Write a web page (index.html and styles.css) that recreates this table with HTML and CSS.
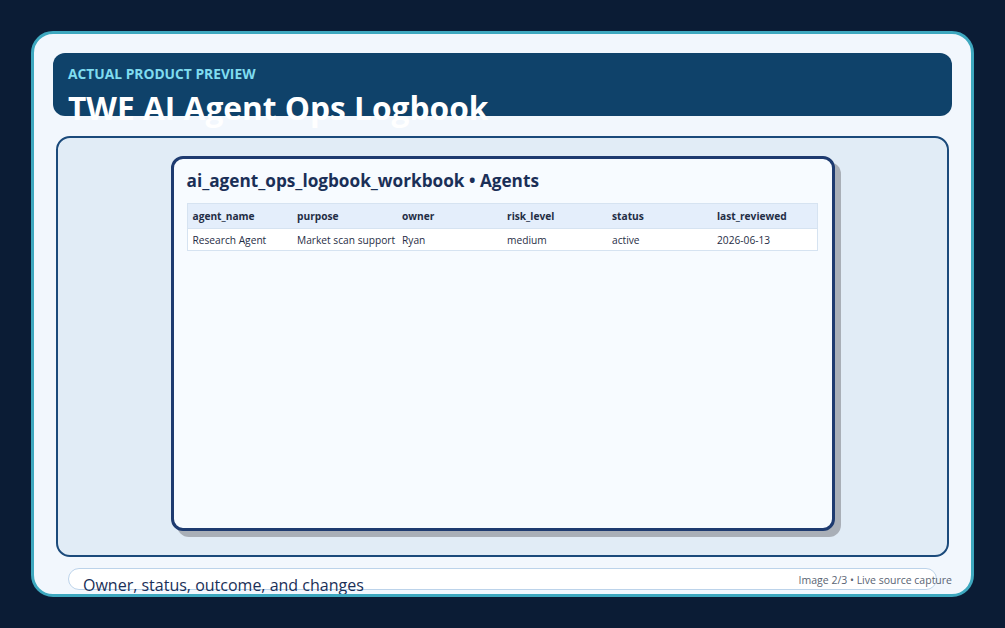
FILE: index.html
```html
<!DOCTYPE html>
<html>
<head>
<meta charset="utf-8">
<link rel="stylesheet" href="styles.css">
</head>
<body>
<div class="card">
  <header class="hero">
    <div class="eyebrow">ACTUAL PRODUCT PREVIEW</div>
    <h1 class="title">TWE AI Agent Ops Logbook</h1>
  </header>
  <section class="stage">
    <div class="window">
      <h2 class="win-title">ai_agent_ops_logbook_workbook • Agents</h2>
      <table class="sheet">
        <thead>
          <tr><th>agent_name</th><th>purpose</th><th>owner</th><th>risk_level</th><th>status</th><th>last_reviewed</th></tr>
        </thead>
        <tbody>
          <tr><td>Research Agent</td><td>Market scan support</td><td>Ryan</td><td>medium</td><td>active</td><td>2026-06-13</td></tr>
        </tbody>
      </table>
    </div>
  </section>
  <footer class="caption-row">
    <div class="pill">Owner, status, outcome, and changes</div>
    <div class="meta">Image 2/3 • Live source capture</div>
  </footer>
</div>
</body>
</html>
```

FILE: styles.css
```css
* { box-sizing: border-box; }
html, body { height: 100%; }
body {
  margin: 0;
  padding: 31px;
  background: #0b1c35;
  font-family: "Open Sans", "Noto Sans", sans-serif;
}
.card {
  height: 100%;
  border: 3px solid #3ea8bf;
  border-radius: 22px;
  background: #f2f7fd;
  padding: 19px 19px 0;
  overflow: hidden;
  display: flex;
  flex-direction: column;
}
.hero {
  height: 63px;
  flex: none;
  background: #0f426a;
  border-radius: 12px;
  padding: 12px 15px 0;
}
.eyebrow {
  color: #7fdcef;
  font-weight: 700;
  font-size: 13.8px;
  line-height: 18px;
}
.title {
  margin: 5px 0 0;
  color: #ffffff;
  font-weight: 700;
  font-size: 31.7px;
  line-height: 40px;
  white-space: nowrap;
}
.stage {
  flex: none;
  height: 421px;
  margin: 20px 3px 0;
  border: 2px solid #1b4a7b;
  border-radius: 14px;
  background: #e1ecf6;
  display: flex;
  justify-content: center;
  align-items: flex-start;
  padding-top: 18px;
}
.window {
  width: 664px;
  height: 375px;
  border: 3px solid #1e3b70;
  border-radius: 12px;
  background: #f7fbff;
  box-shadow: 6px 6px 0 #a9afb7;
  padding: 9px 14px 12px 13px;
}
.win-title {
  margin: 0 0 10px;
  color: #1a2f57;
  font-size: 17.2px;
  font-weight: 700;
  line-height: 25px;
}
.sheet {
  width: 100%;
  border-collapse: collapse;
  table-layout: fixed;
  font-size: 10.2px;
  color: #1f2d45;
}
.sheet th, .sheet td {
  text-align: left;
  padding: 0 5px;
  white-space: nowrap;
  overflow: hidden;
}
.sheet thead tr {
  background: #e4eefb;
  height: 25px;
  border: 1px solid #d6e3f1;
}
.sheet th { font-weight: 700; }
.sheet tbody tr {
  background: #ffffff;
  height: 22px;
  border: 1px solid #d6e3f1;
}
.caption-row {
  display: grid;
  margin: 11px 0 0 15px;
}
.pill {
  grid-area: 1 / 1;
  width: 869px;
  height: 22px;
  border: 1px solid #bcd3ea;
  border-radius: 12px;
  background: #ffffff;
  padding: 5px 0 0 14px;
  color: #1a2f57;
  font-size: 16px;
  line-height: 22px;
  white-space: nowrap;
}
.meta {
  grid-area: 1 / 1;
  justify-self: end;
  color: #5a6473;
  font-size: 10.5px;
  line-height: 14px;
  padding-top: 5px;
  white-space: nowrap;
}
```
